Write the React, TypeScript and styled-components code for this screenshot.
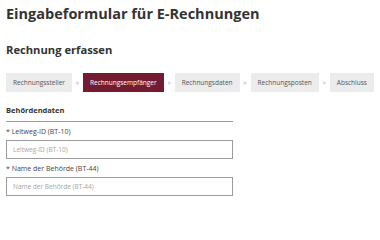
import React from "react";
import styled, { createGlobalStyle } from "styled-components";

const GlobalStyle = createGlobalStyle`
  html, body {
    margin: 0;
    padding: 0;
    background: #ffffff;
  }
  body {
    font-family: "Open Sans", "Noto Sans", sans-serif;
    color: #333333;
  }
`;

const Page = styled.div`
  width: 380px;
  height: 205px;
  padding: 0 6px;
  box-sizing: border-box;
  overflow: hidden;
`;

const Title = styled.h1`
  margin: 0;
  padding-top: 4px;
  font-size: 14.5px;
  line-height: 20px;
  font-weight: 700;
  color: #333333;
`;

const Subtitle = styled.h2`
  margin: 18px 0 0;
  font-size: 11.2px;
  line-height: 16px;
  font-weight: 700;
  color: #333333;
`;

const Steps = styled.nav`
  display: flex;
  align-items: center;
  margin-top: 15px;
  height: 19px;
`;

const Step = styled.div<{ $active?: boolean }>`
  display: flex;
  align-items: center;
  height: 19px;
  padding: 0 7px;
  font-size: 6.5px;
  white-space: nowrap;
  background: ${(p) => (p.$active ? "#731b30" : "#ececec")};
  color: ${(p) => (p.$active ? "#ffffff" : "#555555")};
`;

const Arrow = styled.span`
  width: 11px;
  text-align: center;
  font-size: 7px;
  color: #d7a3ab;
`;

const Section = styled.section`
  width: 227px;
  margin-top: 13px;
`;

const SectionTitle = styled.div`
  font-size: 7.5px;
  font-weight: 700;
  line-height: 10px;
  padding-bottom: 6px;
  border-bottom: 1px solid #9a9a9a;
  color: #333333;
`;

const Field = styled.div`
  display: flex;
  flex-direction: column;
  margin-top: 5px;
`;

const Label = styled.label`
  font-size: 7px;
  line-height: 10px;
  color: #444444;
  margin-bottom: 3px;
`;

const Input = styled.input`
  box-sizing: border-box;
  width: 100%;
  height: 19px;
  margin: 0;
  padding: 0 6px;
  border: 1px solid #9c9c9c;
  border-radius: 0;
  font-family: "Open Sans", "Noto Sans", sans-serif;
  font-size: 6.5px;
  color: #333333;
  outline: none;

  &::placeholder {
    color: #a6a6a6;
  }
`;

const steps = [
  "Rechnungssteller",
  "Rechnungsempfänger",
  "Rechnungsdaten",
  "Rechnungsposten",
  "Abschluss",
];

export default function App() {
  return (
    <>
      <GlobalStyle />
      <Page>
        <Title>Eingabeformular für E-Rechnungen</Title>
        <Subtitle>Rechnung erfassen</Subtitle>
        <Steps>
          {steps.map((s, i) => (
            <React.Fragment key={s}>
              {i > 0 && <Arrow>»</Arrow>}
              <Step $active={i === 1}>{s}</Step>
            </React.Fragment>
          ))}
        </Steps>
        <Section>
          <SectionTitle>Behördendaten</SectionTitle>
          <Field>
            <Label>* Leitweg-ID (BT-10)</Label>
            <Input placeholder="Leitweg-ID (BT-10)" />
          </Field>
          <Field>
            <Label>* Name der Behörde (BT-44)</Label>
            <Input placeholder="Name der Behörde (BT-44)" />
          </Field>
        </Section>
      </Page>
    </>
  );
}
